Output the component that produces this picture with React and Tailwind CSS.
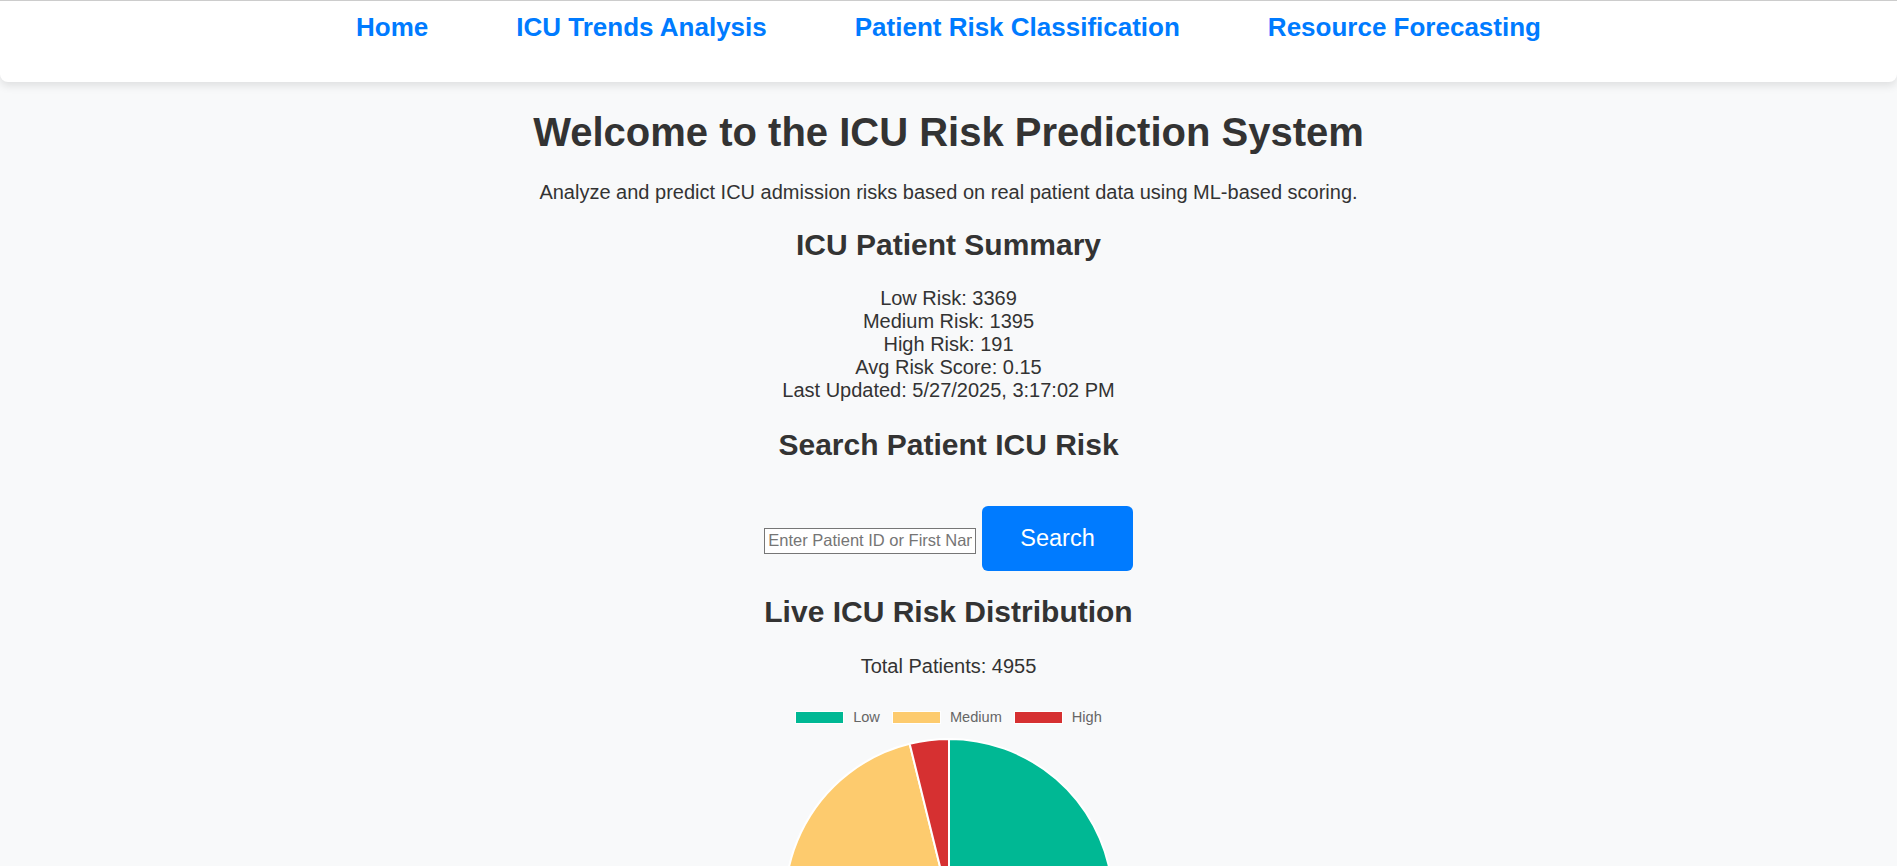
import React from "react";

const links = ["Home", "ICU Trends Analysis", "Patient Risk Classification", "Resource Forecasting"];

function Pie() {
  return (
    <svg width="340" height="340" viewBox="0 0 340 340" className="mt-[7px] block">
      <path d="M170,170 L170,6 A164,164 0 1 1 21.65,239.9 Z" fill="#00b894" stroke="#ffffff" strokeWidth="2" strokeLinejoin="round" />
      <path d="M170,170 L21.65,239.9 A164,164 0 0 1 130.66,10.8 Z" fill="#fdcb6e" stroke="#ffffff" strokeWidth="2" strokeLinejoin="round" />
      <path d="M170,170 L130.66,10.8 A164,164 0 0 1 170,6 Z" fill="#d63031" stroke="#ffffff" strokeWidth="2" strokeLinejoin="round" />
    </svg>
  );
}

function LegendItem({ color, label }) {
  return (
    <div className="flex items-center gap-[9px]">
      <span className={`block w-[49px] h-[13px] border-[1.5px] border-white ${color}`} />
      <span className="text-[14.6px] leading-[17px] text-[#666]">{label}</span>
    </div>
  );
}

export default function App() {
  return (
    <div className="min-h-screen bg-[#f8f9fa] text-[#333] font-['Liberation_Sans',Arial,sans-serif] text-[20px] leading-[23px]">
      <nav className="h-[82px] bg-white border-t border-[#cccccc] rounded-b-lg shadow-[0_4px_8px_rgba(0,0,0,0.1)] flex justify-center items-start gap-[88px] pt-[11px]">
        {links.map((l) => (
          <a key={l} href="#" className="text-[26px] leading-[30px] font-bold text-[#007bff]">
            {l}
          </a>
        ))}
      </nav>
      <main className="flex flex-col items-center text-center">
        <h1 className="mt-[27px] text-[40px] leading-[46px] font-bold">Welcome to the ICU Risk Prediction System</h1>
        <p className="mt-[26px]">Analyze and predict ICU admission risks based on real patient data using ML-based scoring.</p>
        <h2 className="mt-[24px] text-[30px] leading-[34.5px] font-bold">ICU Patient Summary</h2>
        <div className="mt-[24px] flex flex-col items-center">
          <p>Low Risk: 3369</p>
          <p>Medium Risk: 1395</p>
          <p>High Risk: 191</p>
          <p>Avg Risk Score: 0.15</p>
          <p>Last Updated: 5/27/2025, 3:17:02 PM</p>
        </div>
        <h2 className="mt-[26px] text-[30px] leading-[34.5px] font-bold">Search Patient ICU Risk</h2>
        <div className="mt-[44px] flex items-baseline justify-center gap-[6px]">
          <input
            type="text"
            placeholder="Enter Patient ID or First Name"
            className="w-[212px] h-[26px] border border-[#767676] bg-white px-[3px] py-[2px] text-[16.5px] leading-[20px] text-[#333] placeholder:text-[#757575] font-['Liberation_Sans',Arial,sans-serif]"
          />
          <button className="bg-[#007bff] text-white rounded-[6px] px-[38px] py-[19px] text-[23.5px] leading-[27px]">
            Search
          </button>
        </div>
        <h2 className="mt-[24px] text-[30px] leading-[34.5px] font-bold">Live ICU Risk Distribution</h2>
        <p className="mt-[25px]">Total Patients: 4955</p>
        <div className="mt-[31px] flex flex-col items-center">
          <div className="flex items-center gap-[12px]">
            <LegendItem color="bg-[#00b894]" label="Low" />
            <LegendItem color="bg-[#fdcb6e]" label="Medium" />
            <LegendItem color="bg-[#d63031]" label="High" />
          </div>
          <Pie />
        </div>
      </main>
    </div>
  );
}
